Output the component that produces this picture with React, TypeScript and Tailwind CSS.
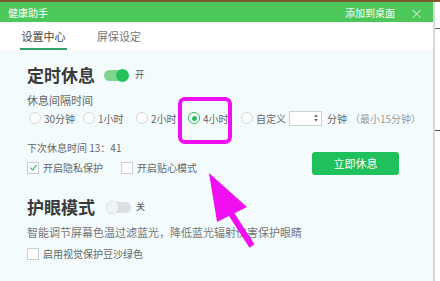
import React from "react";

const font = { fontFamily: '"Noto Sans CJK SC", "Noto Sans", sans-serif' };

function Radio({ label, checked, w }: { label: string; checked?: boolean; w: string }) {
  return (
    <div className={`flex items-center gap-[3px] ${w}`}>
      <span
        className={`flex h-[12px] w-[12px] items-center justify-center rounded-full border bg-white ${
          checked ? "border-[#2fb860]" : "border-[#d5d8da]"
        }`}
      >
        {checked ? <span className="h-[5px] w-[5px] rounded-full bg-[#2fb860]" /> : null}
      </span>
      <span className="text-[10px] text-[#666]">{label}</span>
    </div>
  );
}

function Check({ label, checked, w }: { label: string; checked?: boolean; w?: string }) {
  return (
    <div className={`flex items-center gap-[4px] ${w ?? ""}`}>
      <span className="flex h-[12px] w-[12px] items-center justify-center border border-[#c9cdd0] bg-white">
        {checked ? (
          <svg width="9" height="9" viewBox="0 0 10 10">
            <path d="M1.5 5.2 L4 7.6 L8.6 2.4" fill="none" stroke="#2fb860" strokeWidth="1.3" />
          </svg>
        ) : null}
      </span>
      <span className="text-[10px] text-[#666]">{label}</span>
    </div>
  );
}

function Toggle({ on }: { on: boolean }) {
  return (
    <div
      className={`relative h-[11px] w-[24px] rounded-full ${on ? "bg-[#7fd58f]" : "bg-[#dcdfe1]"}`}
    >
      <span
        className={`absolute top-[-1px] h-[13px] w-[13px] rounded-full ${
          on ? "right-[-1px] bg-[#27c15a]" : "left-[-1px] bg-[#f1f2f3] shadow-[0_0_1px_rgba(0,0,0,0.3)]"
        }`}
      />
    </div>
  );
}

export default function App() {
  return (
    <div className="relative h-[281px] w-[440px] overflow-hidden bg-[#eef1f2]" style={font}>
      <div className="h-[2px] bg-[#7a5a2a]" />
      <div className="flex h-[279px]">
        <div className="flex w-[435px] flex-col border-r-2 border-[#d6d9db] bg-[#f3fbfc]">
          {/* header */}
          <div className="flex h-[20px] items-center bg-[#4cc85b] pl-[8px] pr-[10px] text-white">
            <span className="text-[10px]">健康助手</span>
            <span className="ml-auto text-[10px]">添加到桌面</span>
            <span className="ml-[15px] text-[13px] font-light leading-none text-[#e6f7e8]">×</span>
          </div>
          {/* tabs */}
          <div className="flex h-[28px] bg-white pl-[20px]">
            <div className="flex w-[47px] flex-col items-center">
              <span className="mt-[6px] whitespace-nowrap text-[11px] text-[#444]">设置中心</span>
              <span className="mt-[3px] h-[2px] w-full bg-[#2fa36a]" />
            </div>
            <div className="ml-[30px] flex flex-col">
              <span className="mt-[6px] whitespace-nowrap text-[11px] text-[#777]">屏保设定</span>
            </div>
          </div>
          {/* content */}
          <div className="flex flex-col pl-[27px]">
            <div className="mt-[14px] flex h-[22px] items-center">
              <span className="text-[17px] font-bold text-[#3a3a3a]">定时休息</span>
              <span className="ml-[9px]">
                <Toggle on />
              </span>
              <span className="ml-[7px] text-[9px] text-[#555]">开</span>
            </div>
            <div className="mt-[7px] text-[11px] leading-[14px] text-[#666]">休息间隔时间</div>
            <div className="mt-[3px] flex h-[16px] items-center pl-[2px]">
              <Radio label="30分钟" w="w-[54px]" />
              <Radio label="1小时" w="w-[53px]" />
              <Radio label="2小时" w="w-[52px]" />
              <Radio label="4小时" checked w="w-[53px]" />
              <Radio label="自定义" w="w-[48px]" />
              <div className="flex h-[15px] w-[33px] items-center justify-end border border-[#cfd3d6] bg-white pr-[3px]">
                <svg width="4" height="8" viewBox="0 0 4 8">
                  <path d="M0 3 L2 0.5 L4 3 Z M0 5 L2 7.5 L4 5 Z" fill="#666" />
                </svg>
              </div>
              <span className="ml-[5px] text-[10px] text-[#666]">分钟</span>
              <span className="ml-[3px] text-[10px] text-[#999]">（最小15分钟）</span>
            </div>
            <div className="flex">
              <div className="flex flex-col">
                <div className="mt-[15px] text-[10px] leading-[14px] text-[#666]">下次休息时间 13：41</div>
                <div className="mt-[5px] flex items-center">
                  <Check label="开启隐私保护" checked w="w-[94px]" />
                  <Check label="开启贴心模式" />
                </div>
              </div>
              <button
                type="button"
                className="ml-auto mr-[34px] mt-[26px] h-[23px] w-[87px] rounded-[3px] bg-[#20c15c] text-[11px] text-white"
              >
                立即休息
              </button>
            </div>
            <div className="mt-[21px] flex h-[22px] items-center">
              <span className="text-[17px] font-bold text-[#3a3a3a]">护眼模式</span>
              <span className="ml-[12px]">
                <Toggle on={false} />
              </span>
              <span className="ml-[5px] text-[9px] text-[#555]">关</span>
            </div>
            <div className="mt-[7px] text-[11px] leading-[14px] text-[#777]">
              智能调节屏幕色温过滤蓝光，降低蓝光辐射伤害保护眼睛
            </div>
            <div className="mt-[7px]">
              <Check label="启用视觉保护豆沙绿色" />
            </div>
          </div>
        </div>
        <div className="flex flex-1 flex-col bg-white">
          <div className="mt-[26px] h-[1px] bg-[#666]" />
          <div className="mt-[101px] h-[1px] bg-[#555]" />
        </div>
      </div>

      {/* annotation overlay */}
      <div className="absolute left-[178px] top-[97px] h-[47px] w-[54px] rounded-[7px] border-[4px] border-[#f00ff0]" />
      <svg className="absolute left-0 top-0" width="440" height="281" viewBox="0 0 440 281">
        <polygon points="209,173 247,207 217,222" fill="#f00ff0" />
        <line x1="230" y1="212" x2="252" y2="246" stroke="#f00ff0" strokeWidth="6" />
      </svg>
    </div>
  );
}
